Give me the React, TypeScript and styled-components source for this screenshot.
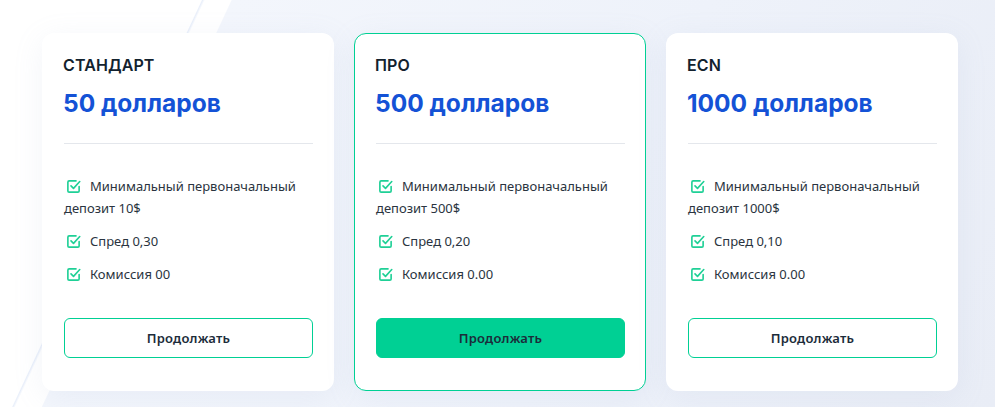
import React, { FC } from "react";
import styled, { createGlobalStyle } from "styled-components";

const GlobalStyle = createGlobalStyle`
  html, body {
    margin: 0;
    padding: 0;
  }
  body {
    width: 995px;
    height: 407px;
    overflow: hidden;
    font-family: "Noto Sans", "Open Sans", sans-serif;
    background:
      linear-gradient(115deg, #ffffff 0%, #ffffff 17%, #e9effa 17.1%, #ffffff 17.3%, #ffffff 19.5%, #f3f6fc 19.6%, #eef2fa 60%, #e9edf6 100%);
  }
`;

const Plans = styled.div`
  display: flex;
  gap: 20px;
  padding: 33px 0 0 42px;
`;

const Card = styled.div<{ $active?: boolean }>`
  box-sizing: border-box;
  width: 292px;
  height: 358px;
  padding: 20px 20px 0 20px;
  background: #ffffff;
  border-radius: 12px;
  border: 1px solid ${(p) => (p.$active ? "#00d094" : "transparent")};
  box-shadow: 0 6px 30px rgba(160, 175, 205, 0.12);
  display: flex;
  flex-direction: column;
`;

const Name = styled.div`
  font-family: Inter, "Noto Sans", sans-serif;
  font-size: 16px;
  font-weight: 600;
  color: #13222e;
  line-height: 22px;
  letter-spacing: 0.1px;
`;

const Price = styled.div`
  margin-top: 11px;
  font-family: Inter, "Noto Sans", sans-serif;
  font-size: 24.5px;
  font-weight: 700;
  color: #1452d6;
  line-height: 32px;
`;

const Divider = styled.div`
  margin: 24px 0 0 1px;
  height: 1px;
  background: #e4e7ec;
`;

const Features = styled.ul`
  list-style: none;
  margin: 31px 0 0 1px;
  padding: 0;
  display: flex;
  flex-direction: column;
  gap: 11px;
`;

const Feature = styled.li`
  font-size: 13px;
  line-height: 22px;
  color: #2a3440;
`;

const Check = styled.svg`
  width: 15px;
  height: 15px;
  margin: 0 9px -3px 2px;
  color: #1fd096;
`;

const Button = styled.button<{ $filled?: boolean }>`
  margin: 33px 0 0 1px;
  height: 40px;
  border-radius: 6px;
  border: 1px solid #00d094;
  background: ${(p) => (p.$filled ? "#00d094" : "#ffffff")};
  font-family: "Noto Sans", "Open Sans", sans-serif;
  font-size: 13px;
  font-weight: 600;
  color: #1c2c3a;
  letter-spacing: 0.2px;
  cursor: pointer;
`;

const CheckIcon: FC = () => (
  <Check viewBox="0 0 24 24" fill="none" stroke="currentColor" strokeWidth={2.6} strokeLinecap="round" strokeLinejoin="round">
    <polyline points="8 11 12 15 22 4" />
    <path d="M21 12v7a2 2 0 0 1-2 2H5a2 2 0 0 1-2-2V5a2 2 0 0 1 2-2h11" />
  </Check>
);

type Plan = {
  name: string;
  price: string;
  deposit: string;
  spread: string;
  fee: string;
  active?: boolean;
};

const plans: Plan[] = [
  { name: "СТАНДАРТ", price: "50 долларов", deposit: "10$", spread: "0,30", fee: "00" },
  { name: "ПРО", price: "500 долларов", deposit: "500$", spread: "0,20", fee: "0.00", active: true },
  { name: "ECN", price: "1000 долларов", deposit: "1000$", spread: "0,10", fee: "0.00" },
];

const App: FC = () => {
  return (
    <>
      <GlobalStyle />
      <Plans>
        {plans.map((plan) => (
          <Card key={plan.name} $active={plan.active}>
            <Name>{plan.name}</Name>
            <Price>{plan.price}</Price>
            <Divider />
            <Features>
              <Feature>
                <CheckIcon />
                Минимальный первоначальный депозит {plan.deposit}
              </Feature>
              <Feature>
                <CheckIcon />
                Спред {plan.spread}
              </Feature>
              <Feature>
                <CheckIcon />
                Комиссия {plan.fee}
              </Feature>
            </Features>
            <Button $filled={plan.active}>Продолжать</Button>
          </Card>
        ))}
      </Plans>
    </>
  );
};

export default App;
